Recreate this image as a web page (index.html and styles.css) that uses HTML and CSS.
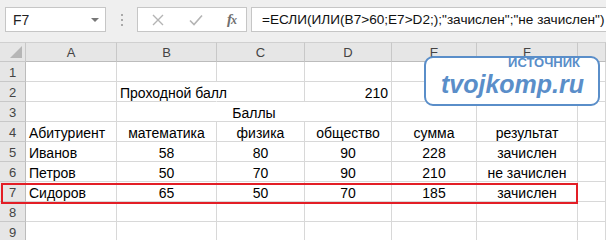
FILE: index.html
```html
<!DOCTYPE html>
<html lang="ru">
<head>
<meta charset="utf-8">
<title>Excel</title>
<link rel="stylesheet" href="styles.css">
</head>
<body>
<div class="app">
  <div class="toolbar">
    <div class="namebox"><span class="ref">F7</span><span class="caret"></span></div>
    <div class="grip"><i></i><i></i><i></i></div>
    <div class="fbtns">
      <svg class="ic" width="14" height="14" viewBox="0 0 14 14"><path d="M2 2L12 12M12 2L2 12" stroke="#b4b4b4" stroke-width="1.4" fill="none"/></svg>
      <svg class="ic" width="16" height="14" viewBox="0 0 16 14"><path d="M2 7.5L6 11.5L14 2.5" stroke="#b4b4b4" stroke-width="1.6" fill="none"/></svg>
      <span class="fx">f<span class="x">x</span></span>
    </div>
    <div class="formula">=ЕСЛИ(ИЛИ(B7&gt;60;E7&gt;D2;);"зачислен";"не зачислен")</div>
  </div>
  <div class="sheet">
    <div class="hd corner"><span class="tri"></span></div>
    <div class="hd col">A</div><div class="hd col">B</div><div class="hd col">C</div><div class="hd col">D</div><div class="hd col">E</div><div class="hd col">F</div><div class="hd col"></div>

    <div class="hd row">1</div>
    <div class="c"></div><div class="c"></div><div class="c"></div><div class="c"></div><div class="c"></div><div class="c"></div><div class="c"></div>

    <div class="hd row">2</div>
    <div class="c"></div><div class="c spill">Проходной балл</div><div class="c"></div><div class="c r">210</div><div class="c"></div><div class="c"></div><div class="c"></div>

    <div class="hd row">3</div>
    <div class="c"></div><div class="c m merge3">Баллы</div><div class="c"></div><div class="c"></div><div class="c"></div>

    <div class="hd row">4</div>
    <div class="c">Абитуриент</div><div class="c m">математика</div><div class="c m">физика</div><div class="c m">общество</div><div class="c m">сумма</div><div class="c m">результат</div><div class="c"></div>

    <div class="hd row">5</div>
    <div class="c">Иванов</div><div class="c m">58</div><div class="c m">80</div><div class="c m">90</div><div class="c m">228</div><div class="c m">зачислен</div><div class="c"></div>

    <div class="hd row">6</div>
    <div class="c">Петров</div><div class="c m">50</div><div class="c m">70</div><div class="c m">90</div><div class="c m">210</div><div class="c m">не зачислен</div><div class="c"></div>

    <div class="hd row">7</div>
    <div class="c">Сидоров</div><div class="c m">65</div><div class="c m">50</div><div class="c m">70</div><div class="c m">185</div><div class="c m">зачислен</div><div class="c"></div>

    <div class="hd row">8</div>
    <div class="c"></div><div class="c"></div><div class="c"></div><div class="c"></div><div class="c"></div><div class="c"></div><div class="c"></div>

    <div class="hd row">9</div>
    <div class="c"></div><div class="c"></div><div class="c"></div><div class="c"></div><div class="c"></div><div class="c"></div><div class="c"></div>
  </div>

  <div class="watermark">
    <div class="wm-top">ИСТОЧНИК</div>
    <div class="wm-main">tvojkomp.ru</div>
  </div>
  <div class="selection"></div>
</div>
</body>
</html>
```

FILE: styles.css
```css
html, body {
  margin: 0;
  padding: 0;
  background: #ffffff;
}
.app {
  position: relative;
  width: 606px;
  height: 240px;
  overflow: hidden;
  font-family: "Liberation Sans", Arial, sans-serif;
  color: #000;
}
.toolbar {
  height: 42px;
  box-sizing: border-box;
  background: #efefef;
  display: flex;
  align-items: flex-start;
  padding-top: 7px;
  padding-left: 5px;
}
.namebox {
  width: 101px;
  height: 25px;
  box-sizing: border-box;
  background: #fff;
  border: 1px solid #c6c6c6;
  display: flex;
  align-items: center;
  justify-content: space-between;
  padding: 0 6px 0 7px;
  font-size: 14px;
  color: #222;
}
.caret {
  width: 0;
  height: 0;
  border-left: 4px solid transparent;
  border-right: 4px solid transparent;
  border-top: 4px solid #777;
}
.grip {
  width: 31px;
  height: 25px;
  display: flex;
  flex-direction: column;
  align-items: center;
  justify-content: center;
  gap: 3px;
}
.grip i {
  display: block;
  width: 2px;
  height: 2px;
  background: #a9a9a9;
}
.fbtns {
  width: 110px;
  height: 25px;
  box-sizing: border-box;
  background: #fff;
  border: 1px solid #c6c6c6;
  display: flex;
  align-items: center;
  justify-content: space-between;
  padding: 0 10px 0 13px;
}
.fx {
  font-family: "Liberation Serif", "Times New Roman", serif;
  font-style: italic;
  font-weight: bold;
  font-size: 15px;
  color: #6f6f6f;
  letter-spacing: -1px;
}
.fx .x {
  font-size: 12px;
}
.formula {
  flex: 1;
  margin-left: 4px;
  height: 25px;
  box-sizing: border-box;
  background: #fff;
  border: 1px solid #c6c6c6;
  border-right: none;
  font-size: 13.6px;
  line-height: 23px;
  padding-left: 10px;
  white-space: nowrap;
  color: #111;
}
.sheet {
  display: grid;
  grid-template-columns: 26px 91px 100px 88px 87px 85px 101px 28px;
  grid-auto-rows: 20px;
}
.hd {
  background: #e6e6e6;
  box-sizing: border-box;
  border-right: 1px solid #c8c8c8;
  border-bottom: 1px solid #c8c8c8;
  color: #444;
  font-size: 13px;
  display: flex;
  align-items: center;
  justify-content: center;
}
.corner {
  position: relative;
  border-top: 1px solid #d0d0d0;
}
.hd.col {
  border-top: 1px solid #d0d0d0;
  border-bottom-color: #bcbcbc;
}
.hd.row {
  border-bottom-color: #c8c8c8;
  border-right-color: #bcbcbc;
  padding-top: 1px;
}
.tri {
  position: absolute;
  right: 3px;
  bottom: 3px;
  width: 0;
  height: 0;
  border-left: 12px solid transparent;
  border-bottom: 12px solid #b6b6b6;
}
.c {
  box-sizing: border-box;
  border-right: 1px solid #d8d8d8;
  border-bottom: 1px solid #d8d8d8;
  font-size: 14px;
  line-height: 16px;
  padding: 3px 3px 0 3px;
  white-space: nowrap;
  overflow: visible;
}
.c.m {
  text-align: center;
}
.c.r {
  text-align: right;
}
.c.spill {
  border-right-color: transparent;
  position: relative;
  z-index: 1;
}
.merge3 {
  grid-column: span 3;
}
.watermark {
  position: absolute;
  left: 424px;
  top: 56px;
  width: 176px;
  height: 50px;
  box-sizing: border-box;
  border: 2px solid #5a8ec9;
  border-radius: 9px;
  background: #fff;
  color: #5a8ec9;
  display: flex;
  flex-direction: column;
  padding: 0 18px 0 15px;
}
.wm-top {
  align-self: flex-end;
  font-size: 13px;
  font-weight: bold;
  line-height: 12px;
  margin-top: -1px;
}
.wm-main {
  font-size: 25px;
  font-weight: bold;
  font-style: italic;
  line-height: 26px;
  margin-top: 2px;
}
.selection {
  position: absolute;
  left: 1px;
  top: 183px;
  width: 577px;
  height: 21px;
  box-sizing: border-box;
  border: 2px solid #e31e26;
}
```
